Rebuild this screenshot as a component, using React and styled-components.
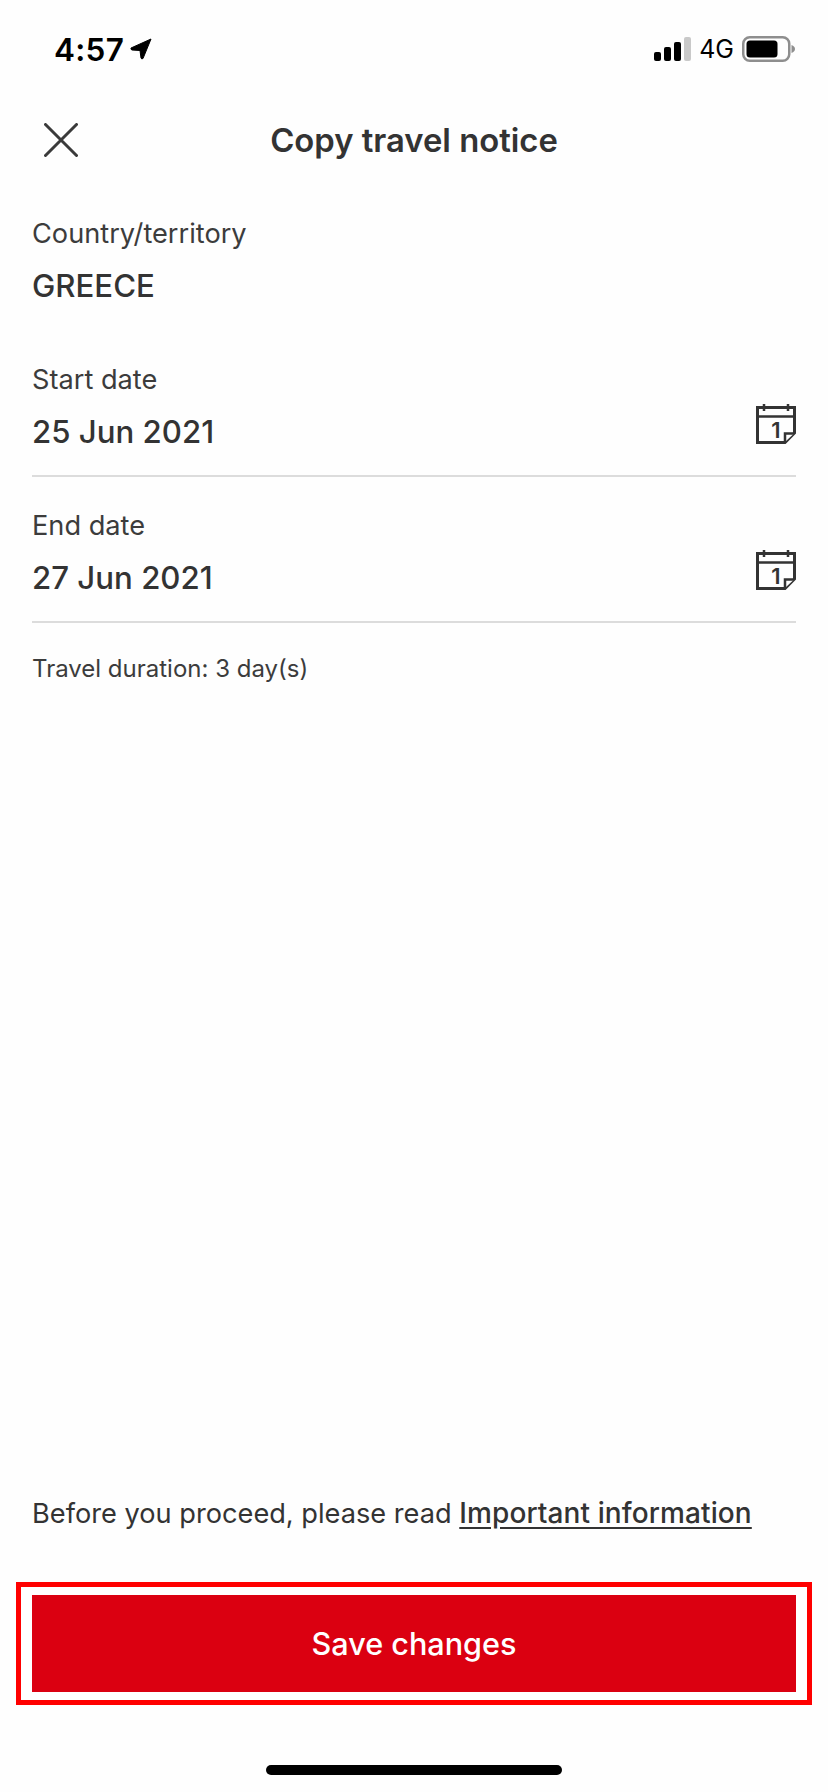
import React from "react";
import styled, { createGlobalStyle } from "styled-components";

const Global = createGlobalStyle`
  html, body { margin: 0; padding: 0; background: #fff; }
  * { box-sizing: border-box; }
`;

const Page = styled.div`
  width: 828px;
  height: 1792px;
  display: flex;
  flex-direction: column;
  background: #fefefe;
  color: #333;
  font-family: Inter, "Liberation Sans", sans-serif;
  overflow: hidden;
`;

const StatusBar = styled.div`
  height: 98px;
  padding: 30px 33px 0 54px;
  display: flex;
  justify-content: space-between;
  align-items: flex-start;
  color: #000;
`;

const StatusLeft = styled.div`
  display: flex;
  align-items: center;
  gap: 6px;
  height: 38px;
  font-size: 31.5px;
  font-weight: 600;
  letter-spacing: 0.3px;
`;

const StatusRight = styled.div`
  display: flex;
  align-items: center;
  gap: 8px;
  height: 38px;
  font-size: 25px;
  font-weight: 400;
`;

const Header = styled.header`
  height: 84px;
  padding: 0 32px 0 44px;
  display: flex;
  align-items: center;
`;

const Title = styled.h1`
  flex: 1;
  margin: 0;
  padding-right: 46px;
  text-align: center;
  font-size: 32.8px;
  font-weight: 600;
  color: #333;
`;

const Fields = styled.main`
  padding: 3px 32px 0;
  flex: 1;
  display: flex;
  flex-direction: column;
`;

const Field = styled.section`
  height: 146px;
  padding-top: 32px;
  display: flex;
  justify-content: space-between;
  align-items: flex-start;
  border-bottom: ${(p) => (p.$plain ? "none" : "2px solid #dcdcdc")};
`;

const FieldText = styled.div`
  display: flex;
  flex-direction: column;
`;

const Label = styled.div`
  font-size: 27.2px;
  line-height: 34px;
  color: #3c3c3c;
`;

const Value = styled.div`
  margin-top: 17px;
  font-size: 31.2px;
  line-height: 36px;
  font-weight: 450;
  color: #333;
`;

const CalendarWrap = styled.div`
  margin-top: 41px;
  width: 40px;
  height: 40px;
`;

const Duration = styled.div`
  margin-top: 32px;
  font-size: 24px;
  line-height: 28px;
  color: #3c3c3c;
`;

const Spacer = styled.div`
  flex: 1;
`;

const Notice = styled.p`
  margin: 0 0 51px;
  font-size: 27.2px;
  line-height: 34px;
  color: #333;
`;

const NoticeLink = styled.a`
  color: #333;
  font-size: 28px;
  font-weight: 450;
  letter-spacing: 0.1px;
  text-decoration: underline;
  text-underline-offset: 4px;
`;

const Highlight = styled.div`
  margin: 0 16px;
  height: 123px;
  padding: 8px 11px;
  border: 5px solid #ff0000;
  background: #fff;
`;

const SaveButton = styled.button`
  display: block;
  width: 100%;
  height: 97px;
  border: 0;
  background: #db0011;
  color: #fff;
  font-family: inherit;
  font-size: 30.6px;
  font-weight: 500;
`;

const HomeArea = styled.div`
  height: 87px;
  padding-top: 60px;
  display: flex;
  justify-content: center;
`;

const HomeBar = styled.div`
  width: 296px;
  height: 10px;
  border-radius: 5px;
  background: #000;
`;

const Arrow = () => (
  <svg width="22" height="22" viewBox="0 0 22 22">
    <path d="M21 1 L1 10 Q0.5 11.5 2 12 L10 12.5 L11 20 Q11.5 21.5 13 20.5 Z" fill="#000" stroke="#000" strokeLinejoin="round" />
  </svg>
);

const Signal = () => (
  <svg width="37" height="24" viewBox="0 0 37 24">
    <rect x="0" y="15" width="7" height="9" rx="2" fill="#000" />
    <rect x="10" y="10" width="7" height="14" rx="2" fill="#000" />
    <rect x="20" y="5" width="7" height="19" rx="2" fill="#000" />
    <rect x="30" y="0" width="7" height="24" rx="2" fill="#c9c9c9" />
  </svg>
);

const Battery = () => (
  <svg width="53" height="26" viewBox="0 0 53 26">
    <rect x="1.25" y="1.25" width="46" height="23.5" rx="6.5" fill="none" stroke="#8e8e8e" strokeWidth="2.5" />
    <rect x="4.5" y="4.5" width="31" height="17" rx="3.5" fill="#000" />
    <path d="M49.5 9 Q53 10.5 53 13 Q53 15.5 49.5 17 Z" fill="#8e8e8e" />
  </svg>
);

const CloseIcon = () => (
  <svg width="34" height="34" viewBox="0 0 34 34">
    <path d="M1.5 1.5 L32.5 32.5 M32.5 1.5 L1.5 32.5" stroke="#3a3a3a" strokeWidth="3" strokeLinecap="round" fill="none" />
  </svg>
);

const CalendarIcon = () => (
  <svg width="40" height="40" viewBox="0 0 40 40">
    <path d="M1.5 3.5 H38.5 V29 L29 38.5 H1.5 Z" fill="none" stroke="#333" strokeWidth="3" strokeLinejoin="miter" />
    <path d="M1.5 12.5 H38.5" stroke="#333" strokeWidth="2.5" />
    <path d="M8 0 V7 M32 0 V7" stroke="#333" strokeWidth="2.5" />
    <path d="M29 38 V29.5 H38" fill="#fff" stroke="#333" strokeWidth="2.5" />
    <text x="20" y="34" textAnchor="middle" fontFamily="Inter, sans-serif" fontSize="22" fontWeight="600" fill="#333">1</text>
  </svg>
);

const DateField = ({ label, value }) => (
  <Field>
    <FieldText>
      <Label>{label}</Label>
      <Value>{value}</Value>
    </FieldText>
    <CalendarWrap>
      <CalendarIcon />
    </CalendarWrap>
  </Field>
);

export default function App() {
  return (
    <Page>
      <Global />
      <StatusBar>
        <StatusLeft>
          4:57
          <Arrow />
        </StatusLeft>
        <StatusRight>
          <Signal />
          4G
          <Battery />
        </StatusRight>
      </StatusBar>
      <Header>
        <CloseIcon />
        <Title>Copy travel notice</Title>
      </Header>
      <Fields>
        <Field $plain>
          <FieldText>
            <Label>Country/territory</Label>
            <Value>GREECE</Value>
          </FieldText>
        </Field>
        <DateField label="Start date" value="25 Jun 2021" />
        <DateField label="End date" value="27 Jun 2021" />
        <Duration>Travel duration: 3 day(s)</Duration>
        <Spacer />
        <Notice>
          Before you proceed, please read <NoticeLink>Important information</NoticeLink>
        </Notice>
      </Fields>
      <Highlight>
        <SaveButton>Save changes</SaveButton>
      </Highlight>
      <HomeArea>
        <HomeBar />
      </HomeArea>
    </Page>
  );
}
